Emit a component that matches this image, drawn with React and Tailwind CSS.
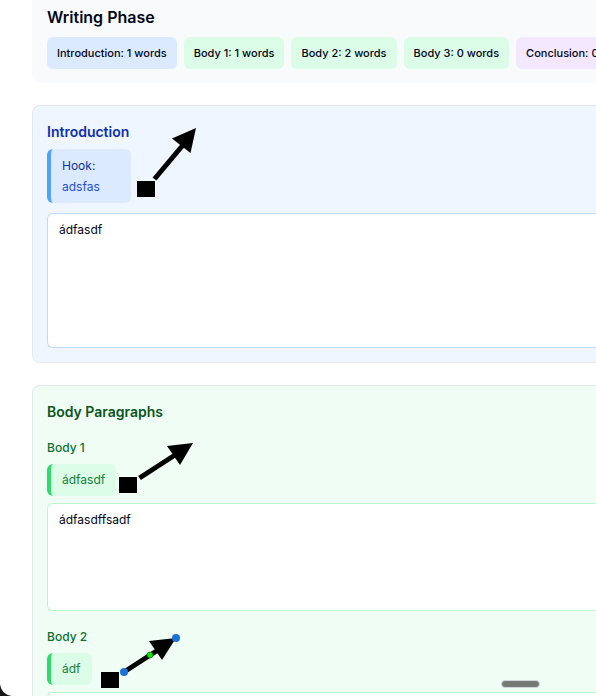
import React from "react";

const counts = [
  { label: "Introduction: 1 words", tone: "bg-blue-100" },
  { label: "Body 1: 1 words", tone: "bg-green-100" },
  { label: "Body 2: 2 words", tone: "bg-green-100" },
  { label: "Body 3: 0 words", tone: "bg-green-100" },
  { label: "Conclusion: 0 words", tone: "bg-purple-100" },
];

function BodyParagraph({ id, title, note, defaultValue }) {
  return (
    <div className="flex flex-col items-start">
      <label htmlFor={id} className="text-xs leading-5 font-medium text-[#0b7030]">
        {title}
      </label>
      <p className="mt-1.5 rounded-md border-l-4 border-[#2cdb6c] bg-green-100 py-1.5 pr-[11px] pl-[11px] text-xs leading-5 text-[#158040]">
        {note}
      </p>
      <textarea
        id={id}
        defaultValue={defaultValue}
        className="mt-[7px] block h-[108px] w-full resize-none rounded-l-md border border-r-0 border-green-200 bg-white px-[11px] py-1.5 text-xs leading-5 text-slate-950 outline-none"
      />
    </div>
  );
}

function Annotations() {
  return (
    <svg className="pointer-events-none absolute top-0 left-0" width="596" height="696" aria-hidden="true">
      <g fill="#000" stroke="#000">
        <path d="M154.500 179 183 145" strokeWidth="5" />
        <path d="M196 128 172 138.500 190.500 153Z" stroke="none" />
        <path d="M139.500 478 175 455" strokeWidth="5" />
        <path d="M193 443 167 446 180 465Z" stroke="none" />
        <path d="M124 672 158 650" strokeWidth="5" />
        <path d="M176 638 149 641 162 660Z" stroke="none" />
        <g stroke="none">
          <rect x="137" y="181" width="18" height="16" />
          <rect x="119" y="477" width="18" height="16" />
          <rect x="101" y="672" width="18" height="16" />
        </g>
      </g>
      <circle cx="124" cy="672" r="4" fill="#1a73d2" />
      <circle cx="176" cy="638" r="4" fill="#1a73d2" />
      <circle cx="150" cy="655" r="3" fill="#00f000" stroke="#064006" strokeWidth="0.500" />
    </svg>
  );
}

export default function App() {
  return (
    <div className="relative h-screen overflow-hidden bg-white font-['Inter','Liberation_Sans',sans-serif] text-slate-950">
      <main className="flex flex-col gap-[22px] pl-8">
        <header className="rounded-bl-lg bg-slate-50 pt-[5px] pb-3.5 pl-[15px]">
          <h1 className="text-base leading-6 font-semibold">Writing Phase</h1>
          <ul className="mt-2 flex gap-[7px] overflow-hidden text-[11px] leading-5 font-medium whitespace-nowrap">
            {counts.map((c) => (
              <li key={c.label} className={`shrink-0 rounded-md px-2.5 py-1.5 ${c.tone}`}>
                {c.label}
              </li>
            ))}
          </ul>
        </header>

        <section className="flex flex-col items-start rounded-l-lg border border-r-0 border-slate-200 bg-blue-50 py-3.5 pl-3.5">
          <h2 className="text-sm leading-6 font-semibold text-[#0d2fb0]">
            <label htmlFor="introduction">Introduction</label>
          </h2>
          <div className="mt-[5px] w-[84px] rounded-md border-l-4 border-blue-400 bg-blue-100 py-1.5 pl-[11px] text-xs leading-[21px]">
            <p className="text-[#1030a8]">Hook:</p>
            <p className="text-[#1d50e0]">adsfas</p>
          </div>
          <textarea
            id="introduction"
            defaultValue="ádfasdf"
            className="mt-2.5 block h-[135px] w-full resize-none rounded-l-md border border-r-0 border-blue-200 bg-white px-[11px] py-1.5 text-xs leading-5 text-slate-950 outline-none"
          />
        </section>

        <section className="rounded-l-lg border border-r-0 border-slate-200 bg-green-50 py-3.5 pl-3.5">
          <h2 className="text-sm leading-6 font-semibold text-[#0a5520]">Body Paragraphs</h2>
          <div className="mt-3.5 flex flex-col gap-4">
            <BodyParagraph id="body-1" title="Body 1" note="ádfasdf" defaultValue="ádfasdffsadf" />
            <BodyParagraph id="body-2" title="Body 2" note="ádf" defaultValue="" />
          </div>
        </section>
      </main>

      <Annotations />
      <div className="absolute right-14 bottom-2 h-2 w-[39px] rounded-full border border-gray-300 bg-[#747b76]" />
      <svg className="absolute bottom-0 left-0" width="12" height="12" aria-hidden="true">
        <path d="M0 0C1 7 5 11 12 12H0Z" fill="#161616" />
      </svg>
    </div>
  );
}
